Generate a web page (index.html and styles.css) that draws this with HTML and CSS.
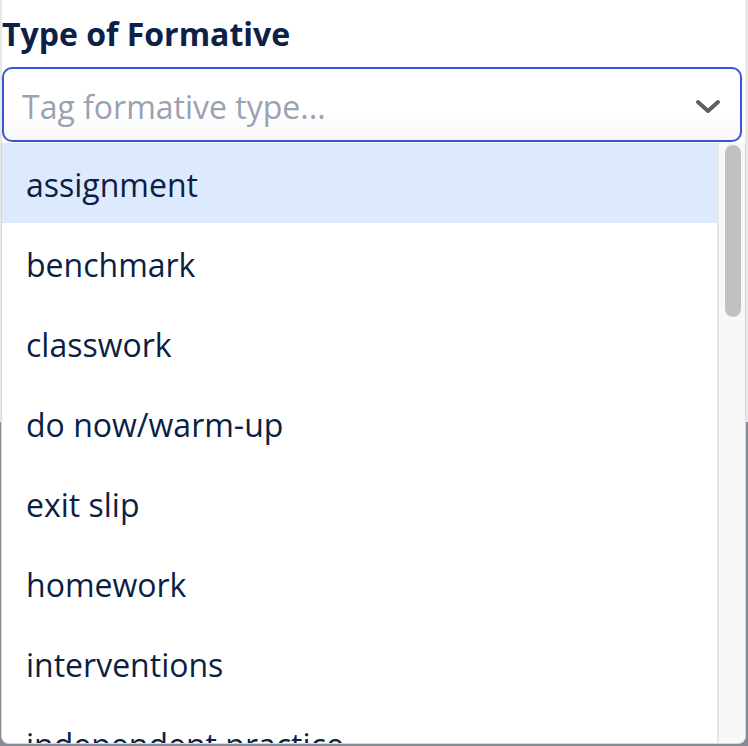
FILE: index.html
```html
<!DOCTYPE html>
<html>
<head>
<meta charset="utf-8">
<link rel="stylesheet" href="styles.css">
</head>
<body>
<div class="page">
  <div class="top">
    <div class="label">Type of Formative</div>
    <div class="field">
      <span class="placeholder">Tag formative type...</span>
      <svg class="chev" width="26" height="16" viewBox="0 0 26 16"><path d="M3 3 L13 12 L23 3" fill="none" stroke="#5f5f5f" stroke-width="4" stroke-linecap="round" stroke-linejoin="round"/></svg>
    </div>
  </div>
  <div class="under"></div>
  <div class="menu">
    <ul class="list">
      <li class="opt active">assignment</li>
      <li class="opt">benchmark</li>
      <li class="opt">classwork</li>
      <li class="opt">do now/warm-up</li>
      <li class="opt">exit slip</li>
      <li class="opt">homework</li>
      <li class="opt">interventions</li>
      <li class="opt">independent practice</li>
    </ul>
    <div class="track"><div class="thumb"></div></div>
  </div>
</div>
</body>
</html>
```

FILE: styles.css
```css
* { box-sizing: border-box; }
html, body { margin: 0; padding: 0; }
body {
  width: 748px;
  height: 746px;
  overflow: hidden;
  background: #ffffff;
  font-family: "Open Sans", "Noto Sans", sans-serif;
}
.page {
  position: relative;
  width: 748px;
  height: 746px;
  display: flex;
  flex-direction: column;
}
.top {
  height: 422px;
  background: #ffffff;
  padding: 11px 3px 0 0;
  border-left: 2px solid #e8e8e8;
  border-right: 3px solid #e8e8e8;
}
.label {
  font-weight: 700;
  font-size: 32px;
  line-height: 46px;
  color: #0c2048;
  padding-left: 0;
  margin-bottom: 10px;
}
.field {
  height: 75px;
  border: 2px solid #3457d5;
  border-radius: 10px;
  background: linear-gradient(#ffffff 60%, #f7f7f7);
  display: flex;
  align-items: center;
  justify-content: space-between;
  padding: 3px 19px 0 18px;
}
.placeholder {
  font-size: 32px;
  color: #9aa2b1;
}
.chev { display: block; margin-top: 1px; }
.under {
  flex: 1;
  background: #858c98;
}
.menu {
  position: absolute;
  left: 1px;
  top: 143px;
  width: 745px;
  height: 601px;
  background: #ffffff;
  border: 1px solid #d8d8d8;
  border-top: none;
  border-radius: 0 0 8px 8px;
  overflow: hidden;
  display: flex;
}
.list {
  list-style: none;
  margin: 0;
  padding: 0;
  flex: 1;
}
.opt {
  height: 80px;
  line-height: 83px;
  font-size: 32px;
  color: #0b1f45;
  padding-left: 24px;
  white-space: nowrap;
  overflow: visible;
}
.opt.active { background: #dde9fc; }
.track {
  width: 28px;
  background: #f8f8f8;
  border-left: 2px solid #e6e6e6;
  padding: 2px 4px 0 6px;
}
.thumb {
  height: 172px;
  background: #c1c1c1;
  border-radius: 8px;
}
```
